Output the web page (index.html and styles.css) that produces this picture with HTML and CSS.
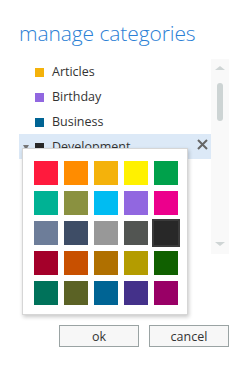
FILE: index.html
```html
<!DOCTYPE html>
<html>
<head>
    <link rel="stylesheet" href="styles.css">
</head>
<body>
    <div class="dialog">
        <div class="title">manage categories</div>
        <div class="panel">
            <div class="list">
                <div class="row">
                    <span class="swatch" style="background:#f4b20b"></span>
                    <span class="name">Articles</span>
                </div>
                <div class="row">
                    <span class="swatch" style="background:#9167e0"></span>
                    <span class="name">Birthday</span>
                </div>
                <div class="row">
                    <span class="swatch" style="background:#006494"></span>
                    <span class="name">Business</span>
                </div>
                <div class="row selected">
                    <span class="arrow"></span>
                    <span class="swatch" style="background:#282828"></span>
                    <span class="name">Development</span>
                    <svg class="close" width="11" height="11" viewBox="0 0 11 11">
                        <path d="M1 1L10 10M10 1L1 10" stroke="#666" stroke-width="2"/>
                    </svg>
                </div>
            </div>
            <div class="scrollbar">
                <span class="up"></span>
                <span class="thumb"></span>
                <span class="down"></span>
            </div>
            <div class="picker">
                <span class="color" style="background:#ff1a3d"></span>
                <span class="color" style="background:#ff8c00"></span>
                <span class="color" style="background:#f4b20b"></span>
                <span class="color" style="background:#fff100"></span>
                <span class="color" style="background:#00a14b"></span>
                <span class="color" style="background:#00b294"></span>
                <span class="color" style="background:#8a9140"></span>
                <span class="color" style="background:#00bcf2"></span>
                <span class="color" style="background:#9167e0"></span>
                <span class="color" style="background:#ec008c"></span>
                <span class="color" style="background:#6d7d99"></span>
                <span class="color" style="background:#3e4d66"></span>
                <span class="color" style="background:#989898"></span>
                <span class="color" style="background:#525552"></span>
                <span class="color current" style="background:#282828"></span>
                <span class="color" style="background:#a4002a"></span>
                <span class="color" style="background:#c85000"></span>
                <span class="color" style="background:#b07000"></span>
                <span class="color" style="background:#b49c00"></span>
                <span class="color" style="background:#106000"></span>
                <span class="color" style="background:#00725a"></span>
                <span class="color" style="background:#5b6225"></span>
                <span class="color" style="background:#006494"></span>
                <span class="color" style="background:#44318a"></span>
                <span class="color" style="background:#990066"></span>
            </div>
        </div>
        <div class="buttons">
            <button class="btn">ok</button>
            <button class="btn">cancel</button>
        </div>
    </div>
</body>
</html>
```

FILE: styles.css
```css
body {
    margin: 0;
    background-color: #ffffff;
    font-family: "Open Sans", "Noto Sans", sans-serif;
}
.dialog {
    width: 247px;
    height: 365px;
    padding-top: 18px;
    box-sizing: border-box;
}
.title {
    margin-left: 19px;
    font-size: 21px;
    font-weight: 300;
    line-height: 30px;
    color: #2b80d5;
    letter-spacing: -0.1px;
}
.panel {
    position: relative;
    display: flex;
    margin-top: 11px;
    margin-left: 19px;
    width: 210px;
    height: 195px;
}
.list {
    flex: 1;
}
.row {
    position: relative;
    display: flex;
    align-items: center;
    height: 25px;
    padding-left: 16px;
}
.row.selected {
    background-color: #dce9f7;
}
.swatch {
    width: 9px;
    height: 9px;
    margin-top: 1px;
}
.name {
    margin-left: 8px;
    font-size: 12.5px;
    color: #333333;
}
.arrow {
    position: absolute;
    left: 4px;
    top: 11px;
    border-left: 3.5px solid transparent;
    border-right: 3.5px solid transparent;
    border-top: 5px solid #777777;
}
.close {
    position: absolute;
    right: 3px;
    top: 5px;
}
.scrollbar {
    position: relative;
    width: 18px;
    background-color: #f9f9f9;
}
.up, .down {
    position: absolute;
    left: 4px;
    border-left: 5px solid transparent;
    border-right: 5px solid transparent;
}
.up {
    top: 7px;
    border-bottom: 4px solid #cfd5d5;
}
.down {
    bottom: 8px;
    border-top: 4px solid #cfd5d5;
}
.thumb {
    position: absolute;
    left: 6px;
    top: 24px;
    width: 6px;
    height: 38px;
    border-radius: 3px;
    background-color: #cdd4d4;
}
.picker {
    position: absolute;
    left: 3px;
    top: 89px;
    width: 166px;
    height: 167px;
    box-sizing: border-box;
    padding: 12px 11px 11px 11px;
    background-color: #ffffff;
    border: 1px solid #d6d6d6;
    box-shadow: 1px 2px 4px rgba(0, 0, 0, 0.22);
    display: grid;
    grid-template-columns: repeat(5, 24px);
    grid-auto-rows: 24px;
    gap: 6px;
}
.color {
    display: block;
}
.color.current {
    outline: 2px solid #3a3a3a;
    outline-offset: 0;
}
.buttons {
    display: flex;
    justify-content: flex-end;
    gap: 10px;
    margin-top: 71px;
    margin-right: 18px;
}
.btn {
    width: 80px;
    height: 22px;
    padding: 0;
    border: 1px solid #9aa3a3;
    background-color: #f7f7f7;
    font-family: "Open Sans", "Noto Sans", sans-serif;
    font-size: 12.5px;
    color: #333333;
}
```
